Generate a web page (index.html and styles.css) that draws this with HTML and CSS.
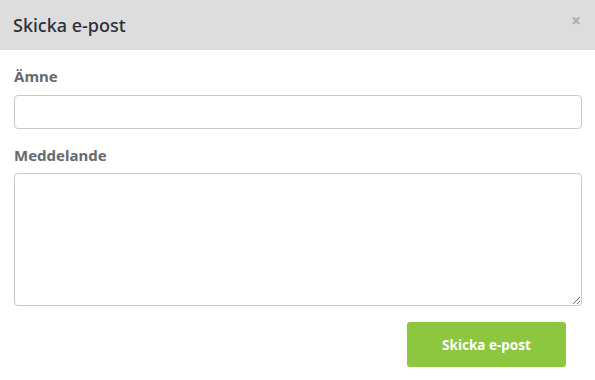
FILE: index.html
```html
<!DOCTYPE html>
<html lang="sv">
<head>
<meta charset="utf-8">
<title>Skicka e-post</title>
<link rel="stylesheet" href="styles.css">
</head>
<body>
<div class="modal">
  <div class="modal-header">
    <h1 class="modal-title">Skicka e-post</h1>
    <span class="close">&times;</span>
  </div>
  <form class="modal-body">
    <label class="field-label" for="subject">Ämne</label>
    <input class="text-input" id="subject" type="text">
    <label class="field-label second" for="message">Meddelande</label>
    <textarea class="text-area" id="message"></textarea>
    <div class="actions">
      <button class="send-btn" type="button">Skicka e-post</button>
    </div>
  </form>
</div>
</body>
</html>
```
FILE: styles.css
```css
html, body {
  margin: 0;
  padding: 0;
  background: #ffffff;
}
body {
  font-family: "Noto Sans", "Open Sans", sans-serif;
}
.modal {
  width: 595px;
}
.modal-header {
  height: 50px;
  background: #dddddd;
  display: flex;
  align-items: center;
  justify-content: space-between;
  padding: 0 14px 0 13px;
  box-sizing: border-box;
}
.modal-title {
  margin: 0;
  font-size: 18px;
  font-weight: 500;
  color: #2b303b;
  line-height: 24px;
}
.close {
  font-size: 17px;
  font-weight: 700;
  color: #ababab;
  line-height: 20px;
  margin-top: -8px;
}
.modal-body {
  display: flex;
  flex-direction: column;
  padding: 16px 13px 0 14px;
  margin: 0;
}
.field-label {
  font-size: 15px;
  font-weight: 700;
  color: #666a6e;
  line-height: 20px;
  margin-bottom: 9px;
}
.field-label.second {
  margin-top: 16px;
  margin-bottom: 8px;
}
.text-input, .text-area {
  box-sizing: border-box;
  width: 568px;
  border: 1px solid #c8c8c8;
  border-radius: 4px;
  background: #fff;
  margin: 0;
  font-family: inherit;
}
.text-input {
  height: 34px;
}
.text-area {
  height: 133px;
  resize: vertical;
  display: block;
}
.actions {
  display: flex;
  justify-content: flex-end;
  padding-right: 16px;
  margin-top: 16px;
}
.send-btn {
  width: 159px;
  height: 45px;
  border: none;
  border-radius: 3px;
  background: #8dc63f;
  color: #ffffff;
  font-family: inherit;
  font-size: 13.5px;
  font-weight: 700;
}
```
